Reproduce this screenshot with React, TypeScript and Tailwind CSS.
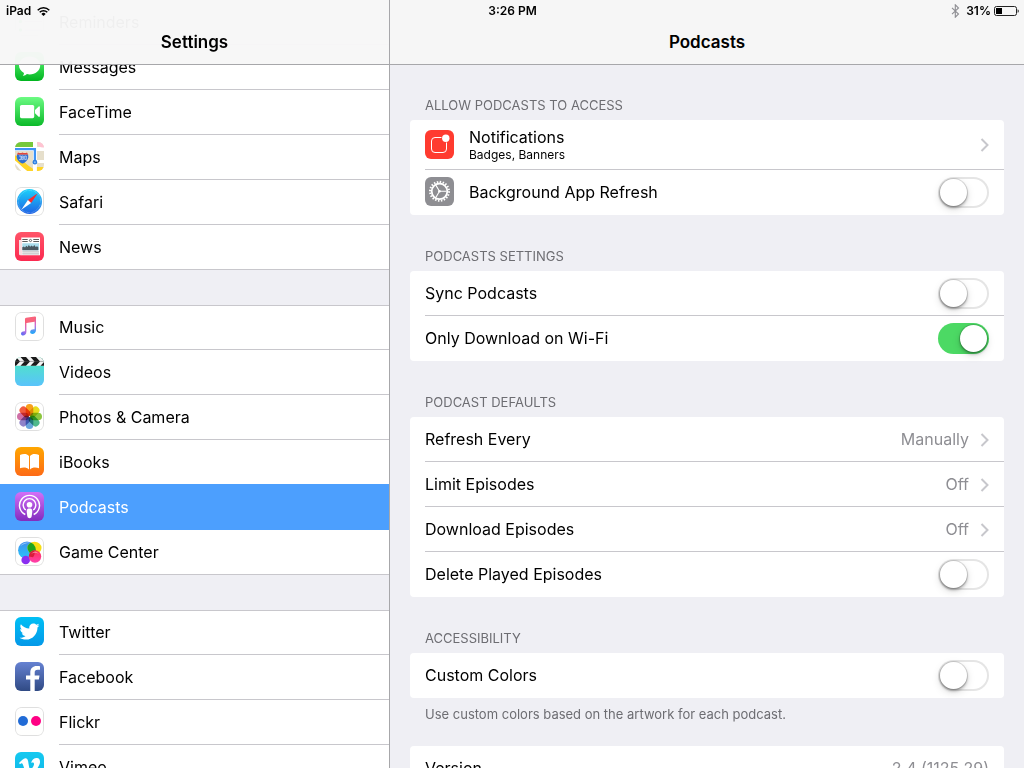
import { useState, type ReactNode } from "react";
import { FaTwitter, FaVimeoV } from "react-icons/fa";

/* ---------- App icons (29pt grid) ---------- */

function Tile({ from, to, children }: { from: string; to: string; children?: ReactNode }) {
  const id = `g${from.slice(1)}${to.slice(1)}`;
  return (
    <svg viewBox="0 0 29 29" className="size-[29px] shrink-0 rounded-[6px]" aria-hidden="true">
      <defs>
        <linearGradient id={id} x1="0" y1="0" x2="0" y2="1">
          <stop offset="0" stopColor={from} />
          <stop offset="1" stopColor={to} />
        </linearGradient>
      </defs>
      <rect width="29" height="29" fill={`url(#${id})`} />
      {children}
    </svg>
  );
}

function WhiteTile({ children }: { children: ReactNode }) {
  return (
    <Tile from="#ffffff" to="#fffffe">
      {children}
      <rect x="0.5" y="0.5" width="28" height="28" rx="5.6" fill="none" stroke="#dfdfdf" />
    </Tile>
  );
}

const RemindersIcon = () => (
  <WhiteTile>
    {[6, 14.5, 23].map((y, i) => (
      <g key={y}>
        <circle cx="5.5" cy={y} r="1.7" fill={["#ff9500", "#4cd964", "#4cd964"][i]} />
        <path d={`M9.5 ${y}H27`} stroke="#c8c7cc" />
      </g>
    ))}
  </WhiteTile>
);

const MessagesIcon = () => (
  <Tile from="#67ff81" to="#01b41f">
    <path
      fill="#fff"
      d="M14.6 4.6c5.9 0 10.6 3.9 10.6 8.9s-4.7 8.9-10.6 8.9c-.9 0-1.8-.1-2.6-.3-.9.8-2.3 1.6-4.2 1.800.8-.8 1.200-1.900 1.200-3C6 19.300 4 16.600 4 13.500 4 8.500 8.700 4.600 14.600 4.600z"
    />
  </Tile>
);

const FaceTimeIcon = () => (
  <Tile from="#6cfb83" to="#0bb929">
    <rect x="5" y="8" width="14.2" height="13.2" rx="1.6" fill="#fff" />
    <path d="M20 13l3.700-3.500c.5-.5 1.200-.2 1.200.6v9c0 .8-.7 1.100-1.200.6L20 16.200z" fill="#fff" />
  </Tile>
);

const MapsIcon = () => (
  <Tile from="#e6dfcc" to="#e6dfcb">
    <path d="M0 0H18V5.200H0z" fill="#76c83c" />
    <path d="M18 0h4v29h-4zM0 5h29v4H0z" fill="#fff" />
    <path d="M22 0h7v5.500h-1A6 6 0 0 1 22 0z" fill="#ffc3d2" />
    <path d="M22 18h7v3h-7z" fill="#fff" />
    <path d="M-1 17.500c5 0 7 9 14 12.500h9" stroke="#fff" strokeWidth="7" fill="none" />
    <path d="M-1 15.500C4 16 8 25 18 29.500M21.500 27.500h8" stroke="#ffd427" strokeWidth="5" fill="none" />
    <path d="M18 18h3.800v11H18z" fill="#fff" />
    <path d="M0 7.200H19.900V19" stroke="#3d93f5" strokeWidth="2.300" fill="none" />
    <circle cx="19.900" cy="20.200" r="1.700" fill="#7fb8f8" stroke="#2f7fe0" strokeWidth="1.400" />
    <path d="M3 10.500q2.200 1 4.500 0 2.300 1 4.500 0l1.300 2.200H1.800z" fill="#e2453c" />
    <path d="M2 12.700h11c1.200 4-1.300 7.200-5.500 8.800C3.300 19.900.8 16.700 2 12.700z" fill="#2f6fd2" />
    <path d="M4 14h2v3.600H4M8.300 14H6.700v3.600h1.600zM6.700 15.800h1.600M9.700 14h1.600v3.600H9.700z" stroke="#d5e4fa" strokeWidth="0.700" fill="none" />
  </Tile>
);

const SafariIcon = () => (
  <WhiteTile>
    <defs>
      <linearGradient id="safari" x1="0" y1="0" x2="0" y2="1">
        <stop offset="0" stopColor="#1bd2fb" />
        <stop offset="1" stopColor="#1e62e4" />
      </linearGradient>
    </defs>
    <circle cx="14.500" cy="14.500" r="12.500" fill="url(#safari)" />
    <circle cx="14.500" cy="14.500" r="11.200" fill="none" stroke="#fff" strokeOpacity="0.450" strokeWidth="1.300" strokeDasharray="0.400 0.900" />
    <path d="M22.700 6.300L12.900 12.900l3.200 3.200z" fill="#fb2a2c" />
    <path d="M6.300 22.700l6.600-9.800 3.200 3.200z" fill="#fff" />
  </WhiteTile>
);

const NewsIcon = () => (
  <Tile from="#ff5468" to="#fb2a50">
    <path d="M4 8h2.500v15.300H5.200A1.200 1.200 0 0 1 4 22.100z" fill="#f6dfe2" />
    <path d="M6.300 5.400H25v17.900H6.300z" fill="#fff" />
    <path d="M7.300 7.500h5.400M18.300 7.500H24M7.300 9.500h5.400M18.300 9.500H24" stroke="#4b4b4b" strokeWidth="0.900" />
    <circle cx="15.500" cy="8.500" r="1.100" fill="none" stroke="#4b4b4b" strokeWidth="0.800" />
    <path d="M7.300 11.300H24v6.900H7.300z" fill="#a9dcec" />
    <path d="M7.300 18.200v-3l1.500-.6 1.200.8 1.300-1.600 1.300 1.200 1.200-2 1.400 1.700 1.400-1.200 1.400 1.300 1.300-1.700 1.400 1.800 1.300-.6 1.300 1v2.900z" fill="#4a5861" />
    <path d="M7.300 19.900H24M7.300 21.900H24" stroke="#a8a8a8" strokeWidth="0.900" />
  </Tile>
);

const MusicIcon = () => (
  <WhiteTile>
    <defs>
      <linearGradient id="note" x1="0.700" y1="0" x2="0.400" y2="1">
        <stop offset="0.100" stopColor="#fb5c74" />
        <stop offset="0.550" stopColor="#c86dd7" />
        <stop offset="1" stopColor="#5e6cf5" />
      </linearGradient>
      <linearGradient id="noteRight" x1="0" y1="0" x2="0" y2="1">
        <stop offset="0" stopColor="#fb5c74" />
        <stop offset="0.500" stopColor="#c86dd7" />
        <stop offset="0.900" stopColor="#2ea4f8" />
      </linearGradient>
    </defs>
    <path d="M10 7.200c0-.8.4-1.200 1.100-1.400l8.700-1.300c.8-.1 1.200.2 1.200 1v4L10 11.300z" fill="#f9647c" />
    <path d="M10 7v12.300c-1-.3-4 .2-4 2.500 0 2.700 5.400 2.500 5.400-2V9z" fill="url(#note)" />
    <path d="M21 5v13.300c0 4.300-5.900 4.600-5.900 1.700 0-2.300 2.900-2.800 4.500-2.600V7z" fill="url(#noteRight)" />
  </WhiteTile>
);

const VideosIcon = () => (
  <Tile from="#4deabc" to="#59c3fb">
    <path d="M0 0h29v8.800H0z" fill="#f4f4f4" />
    <path d="M-4.500 0h5.500l4 4.400-4 4.400h-5.500l4-4.400zM5.500 0h5.500l4 4.400-4 4.400H5.500l4-4.400zM15.500 0h5.500l4 4.400-4 4.400h-5.500l4-4.400zM25.500 0h5.500v8.800h-5.500l4-4.400z" fill="#1b1b1b" />
    <path d="M0 4.400H29" stroke="#555" strokeWidth="0.500" />
  </Tile>
);

const petals = ["#f8a01c", "#e7dc1e", "#8cc63e", "#4fb98b", "#6aa6dc", "#8f83c9", "#cf6fa6", "#f15b3f"];
const PhotosIcon = () => (
  <WhiteTile>
    <g style={{ isolation: "isolate" }}>
      {petals.map((color, i) => (
        <rect
          key={color}
          x="10.700"
          y="2"
          width="7.600"
          height="12"
          rx="3.800"
          fill={color}
          transform={`rotate(${i * 45} 14.500 14.500)`}
          style={{ mixBlendMode: "multiply" }}
        />
      ))}
    </g>
  </WhiteTile>
);

const BooksIcon = () => (
  <Tile from="#ffa700" to="#fd6a17">
    <path d="M14 9c-1.800-2.400-6-2.600-9-1v13.300c3-1.300 6.600-1.200 9 1.200z" fill="#fff" />
    <path d="M15 9c1.800-2.400 6-2.600 9-1v13.300c-3-1.300-6.600-1.200-9 1.200z" fill="#fff" />
  </Tile>
);

const PodcastsIcon = () => (
  <Tile from="#d370f7" to="#822cbe">
    <g fill="none" stroke="#fff" strokeWidth="1.400">
      <path d="M10.300 22.500a10 10 0 1 1 8.400 0" />
      <path d="M10.800 18a6.300 6.300 0 1 1 7.400 0" />
    </g>
    <circle cx="14.500" cy="12.800" r="2.800" fill="#fff" />
    <path d="M11.700 18.800c0-1.500 1.200-2.200 2.800-2.200s2.800.7 2.800 2.200c0 1.700-.4 4.500-.8 6-.3 1.100-1 1.400-2 1.400s-1.700-.3-2-1.400c-.4-1.500-.8-4.300-.8-6z" fill="#fff" />
  </Tile>
);

const GameCenterIcon = () => (
  <WhiteTile>
    <defs>
      <linearGradient id="gcBlue" x1="0" y1="0" x2="0" y2="1">
        <stop offset="0" stopColor="#3f8ef0" />
        <stop offset="1" stopColor="#27c8f8" />
      </linearGradient>
      <linearGradient id="gcPink" x1="0" y1="0" x2="0" y2="1">
        <stop offset="0" stopColor="#ff3150" />
        <stop offset="1" stopColor="#ff3fae" />
      </linearGradient>
      <clipPath id="gcClip">
        <circle cx="12" cy="13.300" r="8.900" />
      </clipPath>
    </defs>
    <circle cx="12" cy="13.300" r="8.900" fill="url(#gcBlue)" />
    <ellipse cx="19.500" cy="11" rx="7" ry="6.300" fill="#f6dd12" />
    <ellipse cx="19.500" cy="11" rx="7" ry="6.300" fill="#1fa51d" clipPath="url(#gcClip)" />
    <circle cx="10.700" cy="23" r="4.300" fill="#8b2ff0" />
    <circle cx="20" cy="19.500" r="6.200" fill="url(#gcPink)" />
    <path d="M13.800 19.500a6.200 6.200 0 0 1 5.500-6.150c1 2.500.2 5-1.300 7z" fill="#d91c3c" />
    <path d="M5 9.500c2-3.400 6-4.800 9.500-3.800-3.500.3-7 1.500-9.500 3.800zM16 17q4-2.500 8 0-4-5-8 0z" fill="#fff" opacity="0.450" />
  </WhiteTile>
);

const TwitterIcon = () => (
  <Tile from="#00c0f5" to="#0498e8">
    <FaTwitter x="4.500" y="4.500" size={20} color="#fff" />
  </Tile>
);

const FacebookIcon = () => (
  <Tile from="#6682d2" to="#304a84">
    <path d="M15.300 29V17.600H11v-4h4.300V10.500c0-4.300 2.600-6.500 6.500-6.500 1.500 0 2.600.1 3.200.2v3.600h-2.300c-2.200 0-3 1-3 2.700v3.100h4.800l-.6 4h-4.200V29z" fill="#fff" />
  </Tile>
);

const FlickrIcon = () => (
  <WhiteTile>
    <circle cx="8" cy="14" r="5" fill="#216bd6" />
    <circle cx="21" cy="14" r="5" fill="#ff0084" />
  </WhiteTile>
);

const VimeoIcon = () => (
  <Tile from="#14c9f0" to="#10b4e8">
    <FaVimeoV x="2.500" y="3" size={24} color="#fff" />
  </Tile>
);

const NotificationsIcon = () => (
  <Tile from="#ff3b30" to="#ff3b2f">
    <path d="M16.500 7.500H10A3.500 3.500 0 0 0 6.500 11v8A3.500 3.500 0 0 0 10 22.500h8a3.500 3.500 0 0 0 3.500-3.500v-6.500" fill="none" stroke="#fff" />
    <circle cx="20.800" cy="8.300" r="3.700" fill="#fff" />
  </Tile>
);

const GearIcon = () => (
  <Tile from="#8e8e93" to="#8e8e92">
    <circle cx="14.500" cy="14.300" r="9.500" fill="none" stroke="#fff" strokeWidth="2" strokeDasharray="1.490 1.490" />
    <circle cx="14.500" cy="14.300" r="7.800" fill="none" stroke="#fff" strokeWidth="1.800" />
    <path d="M14.500 14.300h7M14.500 14.300l-3.700-6.200M14.500 14.300l-3.700 6.200" stroke="#fff" strokeWidth="1.100" />
    <circle cx="14.500" cy="14.300" r="1.300" fill="#fff" />
  </Tile>
);

/* ---------- Status bar ---------- */

function StatusBar() {
  return (
    <div className="absolute inset-x-0 top-0 z-20 grid h-[21px] grid-cols-3 items-center pr-[5px] pl-[6px] text-[12px] font-semibold">
      <div className="flex items-center gap-[6px]">
        <span>iPad</span>
        <svg viewBox="0 0 13 9" className="h-[9px] w-[13px]" aria-label="Wi-Fi">
          <path d="M0.700 3.200a8.300 8.300 0 0 1 11.600 0M2.700 5.300a5.400 5.400 0 0 1 7.600 0" fill="none" stroke="#000" strokeWidth="1.500" />
          <path d="M4.400 6.900a3 3 0 0 1 4.200 0L6.500 9z" />
        </svg>
      </div>
      <span className="text-center">3:26 PM</span>
      <div className="flex items-center justify-end">
        <svg viewBox="0 0 9 14" className="mr-[6px] h-[14px] w-[9px]" aria-label="Bluetooth">
          <path d="M1 3.800l6.500 6.200-3.200 3.200V0.800l3.200 3.200L1 10.200" fill="none" stroke="#8e8e93" strokeWidth="1.100" />
        </svg>
        <span className="mr-[3px]">31%</span>
        <svg viewBox="0 0 25 10" className="h-[10px] w-[25px]" aria-label="Battery">
          <rect x="0.500" y="0.500" width="22" height="9" rx="2" fill="none" stroke="#222" />
          <rect x="2" y="2" width="6" height="6" />
          <path d="M23.700 3.200c1.300.3 1.300 3.300 0 3.600z" />
        </svg>
      </div>
    </div>
  );
}

/* ---------- Sidebar ---------- */

type App = { name: string; Icon: () => ReactNode };

const groups: App[][] = [
  [
    { name: "Reminders", Icon: RemindersIcon },
    { name: "Messages", Icon: MessagesIcon },
    { name: "FaceTime", Icon: FaceTimeIcon },
    { name: "Maps", Icon: MapsIcon },
    { name: "Safari", Icon: SafariIcon },
    { name: "News", Icon: NewsIcon },
  ],
  [
    { name: "Music", Icon: MusicIcon },
    { name: "Videos", Icon: VideosIcon },
    { name: "Photos & Camera", Icon: PhotosIcon },
    { name: "iBooks", Icon: BooksIcon },
    { name: "Podcasts", Icon: PodcastsIcon },
    { name: "Game Center", Icon: GameCenterIcon },
  ],
  [
    { name: "Twitter", Icon: TwitterIcon },
    { name: "Facebook", Icon: FacebookIcon },
    { name: "Flickr", Icon: FlickrIcon },
    { name: "Vimeo", Icon: VimeoIcon },
  ],
];

function SidebarRow({ app, selected, last }: { app: App; selected: boolean; last: boolean }) {
  return (
    <li className={last ? "border-b border-[#c8c7cc]" : ""}>
      <a
        href={`#${app.name}`}
        aria-current={selected ? "page" : undefined}
        className={
          selected
            ? "relative -mt-px flex bg-[#4c9ffe] pt-px pl-[15px] text-white"
            : "flex pl-[15px]"
        }
      >
        <span className="mr-[15px] pt-[7px]">
          <app.Icon />
        </span>
        <span
          className={
            last
              ? "flex h-11 grow items-center"
              : selected
                ? "flex h-[45px] grow items-center border-b border-transparent"
                : "flex h-[45px] grow items-center border-b border-[#c8c7cc]"
          }
        >
          {app.name}
        </span>
      </a>
    </li>
  );
}

/* ---------- Detail pane ---------- */

function Switch({ id, initial = false }: { id: string; initial?: boolean }) {
  const [on, setOn] = useState(initial);
  return (
    <input
      id={id}
      type="checkbox"
      role="switch"
      checked={on}
      onChange={(e) => setOn(e.target.checked)}
      className="flex h-[31px] w-[51px] shrink-0 appearance-none items-center rounded-full bg-white px-[2px] shadow-[inset_0_0_0_2px_#e5e5e5] before:size-[27px] before:rounded-full before:bg-white before:shadow-[0_0_0_1px_rgba(0,0,0,0.12),0_2px_3px_rgba(0,0,0,0.3),0_3px_8px_rgba(0,0,0,0.15)] checked:justify-end checked:bg-[#4cd964] checked:shadow-none"
    />
  );
}

const Chevron = () => (
  <svg viewBox="0 0 9 14" className="ml-[11px] h-[14px] w-[9px]" aria-hidden="true">
    <path d="M1.500 1l6 6-6 6" fill="none" stroke="#c7c7cc" strokeWidth="2" />
  </svg>
);

const rowBase = "ml-[15px] flex items-center pr-[15px] shadow-[inset_0_-1px_0_#c8c7cc] group-last:shadow-none";

function Row({ children }: { children: ReactNode }) {
  return (
    <li className="group">
      <div className={`${rowBase} h-[45px]`}>{children}</div>
    </li>
  );
}

function SwitchRow({ label, on, icon }: { label: string; on?: boolean; icon?: ReactNode }) {
  const id = label.toLowerCase().replace(/\W+/g, "-");
  return (
    <Row>
      {icon && <span className="mr-[15px] mb-[2px]">{icon}</span>}
      <label htmlFor={id} className="grow pb-[2px]">
        {label}
      </label>
      <Switch id={id} initial={on} />
    </Row>
  );
}

function LinkRow({ label, value }: { label: string; value: string }) {
  return (
    <li className="group">
      <a href={`#${label}`} className={`${rowBase} h-[45px]`}>
        <span className="grow pb-[2px]">{label}</span>
        <span className="pb-[2px] text-[#8e8e93]">{value}</span>
        <Chevron />
      </a>
    </li>
  );
}

function Section({ title, note, children }: { title: string; note?: string; children: ReactNode }) {
  return (
    <section>
      <h2 className="flex h-14 items-end px-[15px] pb-[6px] text-[13px] leading-[18px] text-[#6d6d72]">{title}</h2>
      <ul className="rounded-[4px] bg-white">{children}</ul>
      {note && <p className="px-[15px] pt-[7px] pb-[23px] text-[13px] leading-[18px] text-[#6d6d72]">{note}</p>}
    </section>
  );
}

const paneHeader = "sticky top-0 z-10 -mb-[65px] flex h-[65px] items-end justify-center border-b border-[#a7a7aa] pb-[11px]";

export default function App() {
  return (
    <div className="relative flex h-screen overflow-hidden bg-[#efeff4] font-['Inter','Liberation_Sans',sans-serif] text-[16px] leading-[22px] text-black">
      <StatusBar />

      <nav className="w-[390px] shrink-0 overflow-y-auto border-r border-[#a7a7aa] [scrollbar-width:none]">
        <header className={`${paneHeader} bg-[#f7f7f7]/97`}>
          <h1 className="text-[17px] font-semibold">Settings</h1>
        </header>
        <div className="flex flex-col gap-[35px]">
          {groups.map((apps, g) => (
            <ul key={apps[0].name} className={g > 0 ? "border-t border-[#c8c7cc] bg-white [&>li:first-child]:-mt-px" : "bg-white"}>
              {apps.map((app, i) => (
                <SidebarRow key={app.name} app={app} selected={app.name === "Podcasts"} last={i === apps.length - 1} />
              ))}
            </ul>
          ))}
        </div>
      </nav>

      <main className="grow overflow-y-auto [scrollbar-width:none]">
        <header className={`${paneHeader} bg-[#f6f6f6]`}>
          <h1 className="text-[17px] font-semibold">Podcasts</h1>
        </header>
        <div className="px-5 pt-16">
          <Section title="ALLOW PODCASTS TO ACCESS">
            <li className="group">
              <a href="#notifications" className={`${rowBase} h-[50px]`}>
                <span className="mr-[15px] mb-[2px]">
                  <NotificationsIcon />
                </span>
                <span className="flex grow flex-col">
                  <span className="leading-[20px]">Notifications</span>
                  <span className="text-[12px] leading-[16px]">Badges, Banners</span>
                </span>
                <Chevron />
              </a>
            </li>
            <SwitchRow label="Background App Refresh" icon={<GearIcon />} />
          </Section>

          <Section title="PODCASTS SETTINGS">
            <SwitchRow label="Sync Podcasts" />
            <SwitchRow label="Only Download on Wi-Fi" on />
          </Section>

          <Section title="PODCAST DEFAULTS">
            <LinkRow label="Refresh Every" value="Manually" />
            <LinkRow label="Limit Episodes" value="Off" />
            <LinkRow label="Download Episodes" value="Off" />
            <SwitchRow label="Delete Played Episodes" />
          </Section>

          <Section title="ACCESSIBILITY" note="Use custom colors based on the artwork for each podcast.">
            <SwitchRow label="Custom Colors" />
          </Section>

          <ul className="rounded-[4px] bg-white">
            <Row>
              <span className="grow pb-[2px]">Version</span>
              <span className="pb-[2px] text-[#8e8e93]">2.4 (1125.29)</span>
            </Row>
          </ul>
        </div>
      </main>
    </div>
  );
}
